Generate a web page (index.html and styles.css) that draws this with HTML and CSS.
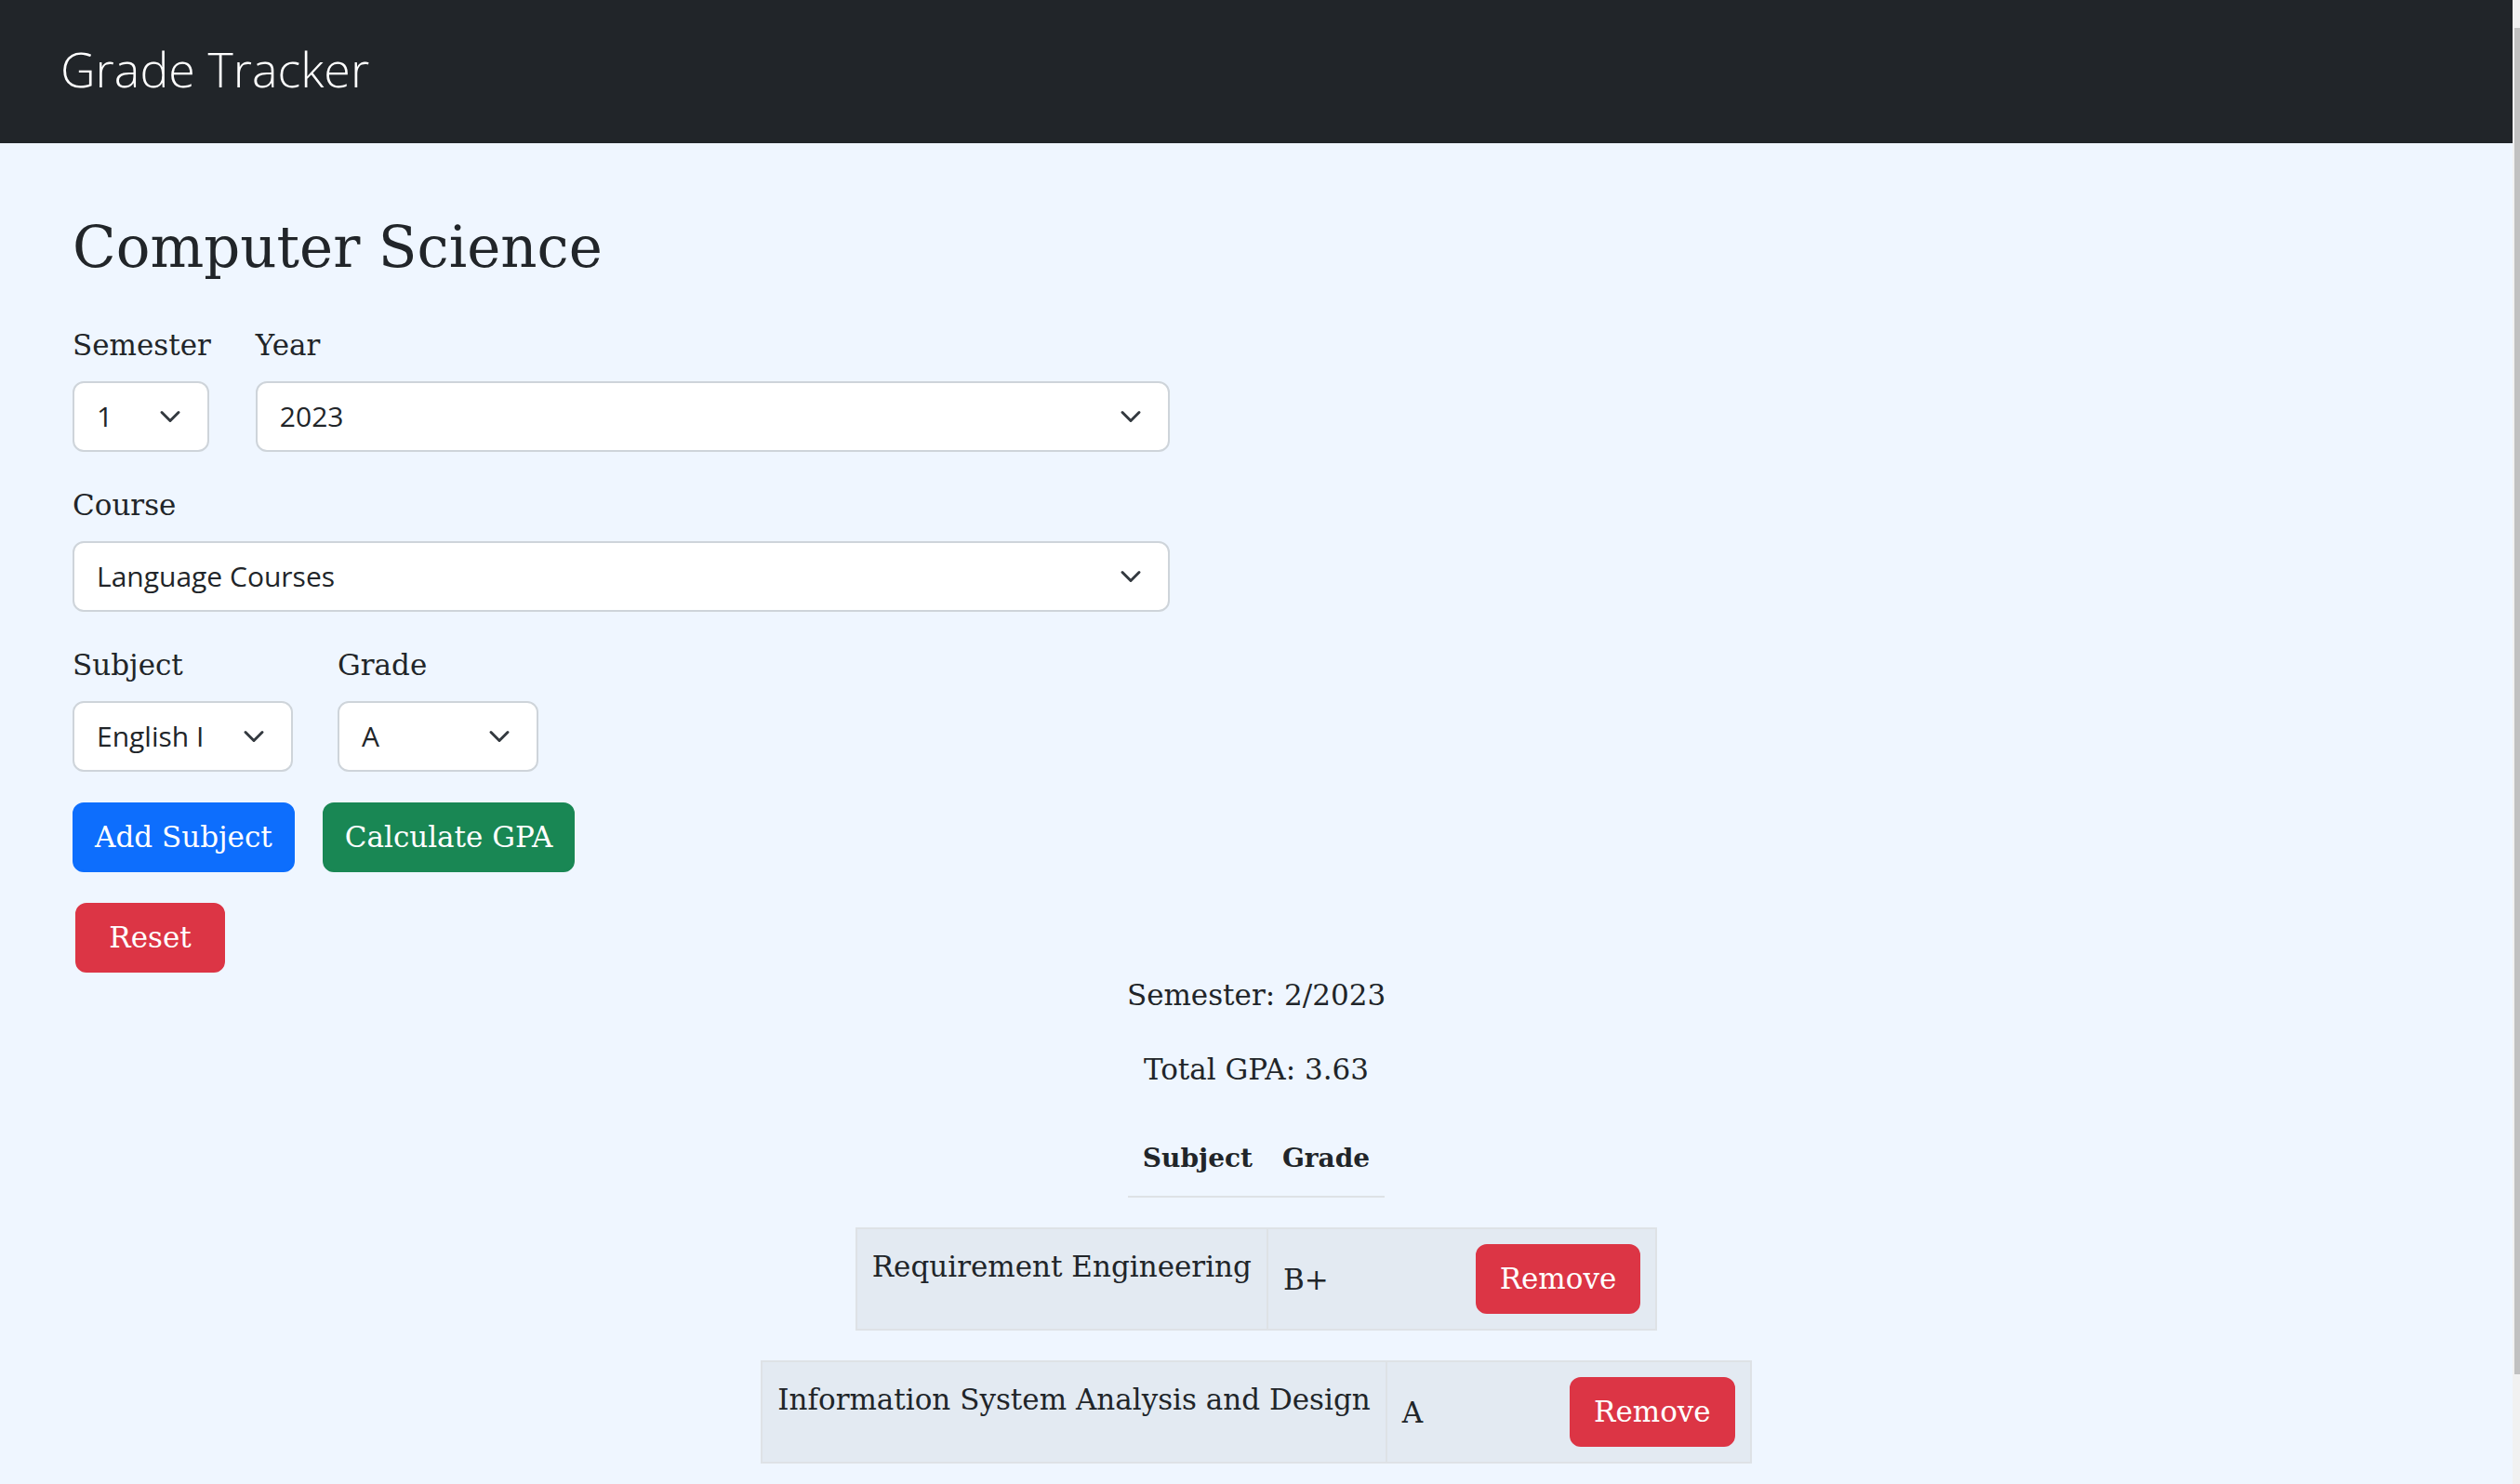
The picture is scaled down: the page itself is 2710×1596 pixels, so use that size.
FILE: index.html
```html
<!DOCTYPE html>
<html lang="en">
<head>
<meta charset="utf-8">
<title>Grade Tracker</title>
<link rel="stylesheet" href="styles.css">
</head>
<body>
<div class="app">
  <nav class="navbar">
    <span class="brand">Grade Tracker</span>
  </nav>
  <main class="page">
    <h1 class="title">Computer Science</h1>

    <div class="field-row">
      <div class="field">
        <label class="label">Semester</label>
        <div class="select w-sem"><span>1</span><svg class="chev" viewBox="0 0 16 16"><path d="M2 5l6 6 6-6"/></svg></div>
      </div>
      <div class="field">
        <label class="label">Year</label>
        <div class="select w-year"><span>2023</span><svg class="chev" viewBox="0 0 16 16"><path d="M2 5l6 6 6-6"/></svg></div>
      </div>
    </div>

    <div class="field-row">
      <div class="field">
        <label class="label">Course</label>
        <div class="select w-course"><span>Language Courses</span><svg class="chev" viewBox="0 0 16 16"><path d="M2 5l6 6 6-6"/></svg></div>
      </div>
    </div>

    <div class="field-row last">
      <div class="field">
        <label class="label">Subject</label>
        <div class="select w-subject"><span>English I</span><svg class="chev" viewBox="0 0 16 16"><path d="M2 5l6 6 6-6"/></svg></div>
      </div>
      <div class="field">
        <label class="label">Grade</label>
        <div class="select w-grade"><span>A</span><svg class="chev" viewBox="0 0 16 16"><path d="M2 5l6 6 6-6"/></svg></div>
      </div>
    </div>

    <div class="btn-row">
      <button class="btn btn-primary">Add Subject</button>
      <button class="btn btn-success">Calculate GPA</button>
    </div>
    <button class="btn btn-danger reset">Reset</button>

    <section class="results">
      <p class="info">Semester: 2/2023</p>
      <p class="info">Total GPA: 3.63</p>
      <table class="head-table">
        <thead><tr><th>Subject</th><th>Grade</th></tr></thead>
      </table>
      <table class="row-table">
        <tr>
          <td class="subj">Requirement Engineering</td>
          <td class="grade"><div class="grade-cell"><span>B+</span><button class="btn btn-danger">Remove</button></div></td>
        </tr>
      </table>
      <table class="row-table">
        <tr>
          <td class="subj">Information System Analysis and Design</td>
          <td class="grade"><div class="grade-cell"><span>A</span><button class="btn btn-danger">Remove</button></div></td>
        </tr>
      </table>
    </section>
  </main>
</div>
<div class="scrollbar"><div class="sb-thumb"></div></div>
</body>
</html>
```
FILE: styles.css
```css
html, body {
  margin: 0;
  padding: 0;
}
html {
  overflow: hidden;
}
body {
  background: #eff6ff;
  color: #212529;
  font-family: "DejaVu Serif", "Liberation Serif", serif;
  font-size: 31px;
  line-height: 48px;
  display: flex;
  align-items: flex-start;
}
.app {
  flex: 1;
  min-width: 0;
}
.scrollbar {
  flex: none;
  width: 8px;
  height: 100vh;
  box-sizing: border-box;
  padding: 30px 0 0 2px;
  background: #f1f1f1;
}
.sb-thumb {
  height: 1448px;
  background: #c1c1c1;
}

.navbar {
  height: 154px;
  box-sizing: border-box;
  background: #212529;
  display: flex;
  align-items: center;
  padding: 0 0 7px 65px;
}
.brand {
  font-family: "Open Sans", "Noto Sans", sans-serif;
  font-weight: 300;
  font-size: 52px;
  line-height: 52px;
  color: #ffffff;
}

.page {
  padding: 75px 78px 85px;
}
.title {
  font-size: 61px;
  line-height: 74px;
  font-weight: 400;
  margin: 0 0 44px;
}
.field-row {
  display: flex;
  gap: 48px;
  margin-bottom: 33px;
}
.field-row.last {
  margin-bottom: 33px;
}
.label {
  display: block;
  margin-bottom: 15px;
}
.select {
  box-sizing: border-box;
  height: 76px;
  background: #ffffff;
  border: 2px solid #ced4da;
  border-radius: 12px;
  display: flex;
  align-items: center;
  justify-content: space-between;
  padding: 0 28px 0 24px;
  font-family: "Open Sans", "Noto Sans", sans-serif;
  font-size: 30px;
  color: #212529;
}
.chev {
  width: 24px;
  height: 24px;
  flex: none;
  fill: none;
  stroke: #343a40;
  stroke-width: 2;
  stroke-linecap: round;
  stroke-linejoin: round;
}
.w-sem { width: 147px; }
.w-year { width: 983px; }
.w-course { width: 1180px; }
.w-subject { width: 237px; }
.w-grade { width: 216px; }

.btn {
  font-family: "DejaVu Serif", "Liberation Serif", serif;
  font-size: 31px;
  line-height: 47px;
  padding: 12px 24px;
  border: 2px solid transparent;
  border-radius: 12px;
  color: #ffffff;
  cursor: pointer;
}
.btn-primary { background: #0d6efd; border-color: #0d6efd; }
.btn-success { background: #198754; border-color: #198754; }
.btn-danger { background: #dc3545; border-color: #dc3545; }

.btn-row {
  display: flex;
  gap: 30px;
  margin-bottom: 33px;
}
.btn-row .btn {
  padding: 12px 22px;
}
.reset {
  display: block;
  width: 161px;
  padding: 12px 0;
  margin: 0 0 0 3px;
}

.results {
  text-align: center;
}
.info {
  margin: 0 0 32px;
}
.head-table,
.row-table {
  border-collapse: collapse;
  margin: 0 auto 32px;
}
.head-table th {
  padding: 16px;
  font-size: 28px;
  font-weight: 700;
  border-bottom: 2px solid #dee2e6;
  text-align: left;
}
.row-table td {
  padding: 16px;
  border: 2px solid #dee2e6;
  background: #e3eaf2;
  text-align: left;
}
.row-table td.subj {
  vertical-align: top;
}
.row-table td.grade {
  vertical-align: middle;
}
.grade-cell {
  display: flex;
  align-items: center;
  gap: 158px;
}
```
